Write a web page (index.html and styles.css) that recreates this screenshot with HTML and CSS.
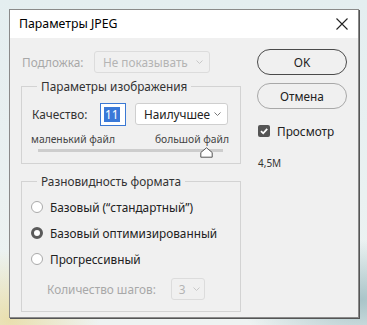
FILE: index.html
```html
<!DOCTYPE html>
<html lang="ru">
<head>
  <meta charset="UTF-8">
  <title>Параметры JPEG</title>
  <link rel="stylesheet" href="styles.css">
</head>
<body>
  <div class="dialog">
    <div class="titlebar">
      <span class="title">Параметры JPEG</span>
      <svg class="close" width="12" height="12" viewBox="0 0 12 12">
        <path d="M0.5 0.5 L11.5 11.5 M11.5 0.5 L0.5 11.5" stroke="#222" stroke-width="1.1" fill="none"/>
      </svg>
    </div>
    <div class="content">
      <div class="left">
        <div class="row matte">
          <span class="label disabled">Подложка:</span>
          <div class="select wide disabled-select">
            <span>Не показывать</span>
            <svg class="chev" width="7" height="4" viewBox="0 0 7 4"><path d="M0.5 0.5 L3.5 3.5 L6.5 0.5" stroke="#c8c8c8" fill="none"/></svg>
          </div>
        </div>

        <fieldset class="group first">
          <legend>Параметры изображения</legend>
          <div class="row quality">
            <span class="label">Качество:</span>
            <div class="num"><span class="sel">11</span></div>
            <div class="select best">
              <span>Наилучшее</span>
              <svg class="chev" width="7" height="4" viewBox="0 0 7 4"><path d="M0.5 0.5 L3.5 3.5 L6.5 0.5" stroke="#777" fill="none"/></svg>
            </div>
          </div>
          <div class="scale">
            <span>маленький файл</span>
            <span>большой файл</span>
          </div>
          <div class="track">
            <svg class="thumb" width="13" height="11" viewBox="0 0 13 11">
              <path d="M6.5 0.8 L12.2 5.5 L12.2 10.2 L0.8 10.2 L0.8 5.5 Z" fill="#fff" stroke="#555" stroke-width="1"/>
            </svg>
          </div>
        </fieldset>

        <fieldset class="group second">
          <legend>Разновидность формата</legend>
          <div class="radio-row"><span class="radio"></span><span>Базовый (“стандартный”)</span></div>
          <div class="radio-row"><span class="radio on"></span><span>Базовый оптимизированный</span></div>
          <div class="radio-row"><span class="radio"></span><span>Прогрессивный</span></div>
          <div class="row steps">
            <span class="label disabled">Количество шагов:</span>
            <div class="select small disabled-select">
              <span>3</span>
              <svg class="chev" width="7" height="4" viewBox="0 0 7 4"><path d="M0.5 0.5 L3.5 3.5 L6.5 0.5" stroke="#c8c8c8" fill="none"/></svg>
            </div>
          </div>
        </fieldset>
      </div>

      <div class="right">
        <div class="button primary">OK</div>
        <div class="button">Отмена</div>
        <div class="check-row">
          <span class="checkbox">
            <svg width="12" height="12" viewBox="0 0 12 12"><path d="M3 6.2 L5.2 8.3 L9.2 3.8" stroke="#fff" stroke-width="1.8" fill="none"/></svg>
          </span>
          <span>Просмотр</span>
        </div>
        <div class="size">4,5M</div>
      </div>
    </div>
  </div>
</body>
</html>
```

FILE: styles.css
```css
* {
  margin: 0;
  padding: 0;
  box-sizing: border-box;
}

body {
  width: 367px;
  height: 325px;
  padding: 9px;
  overflow: hidden;
  font-family: "Noto Sans", "Open Sans", sans-serif;
  font-size: 11.8px;
  line-height: 16px;
  color: #333;
  background:
    radial-gradient(ellipse 90px 70px at 10px 320px, #e9dfae, transparent),
    radial-gradient(ellipse 120px 60px at 360px 300px, #a9c4c8, transparent),
    linear-gradient(#e4eef0, #eef3f2);
}

.dialog {
  width: 350px;
  height: 309px;
  background: #f0f0f0;
  border: 1px solid #8a8a8a;
  box-shadow: 1px 1px 0 #555;
  display: flex;
  flex-direction: column;
}

.titlebar {
  height: 28px;
  background: #fff;
  display: flex;
  align-items: center;
  justify-content: space-between;
  padding: 0 10px 0 9px;
  flex-shrink: 0;
}

.title {
  font-size: 12.3px;
  color: #000;
}

.content {
  display: flex;
  justify-content: space-between;
  padding: 11px 11px 0 11px;
}

.left {
  width: 220px;
  display: flex;
  flex-direction: column;
}

.row {
  display: flex;
  align-items: center;
}

.matte {
  height: 26px;
  padding-left: 1px;
}

.matte .label {
  width: 72px;
}

.disabled {
  color: #a8a8a8;
}

.select {
  height: 22px;
  background: #fff;
  border: 1px solid #cfcfcf;
  border-radius: 3px;
  display: flex;
  align-items: center;
  justify-content: space-between;
  padding: 0 6px 0 8px;
}

.disabled-select {
  background: #f0f0f0;
  border-color: #dcdcdc;
  color: #b4b4b4;
}

.wide {
  width: 116px;
}

.group {
  border: 1px solid #d3d3d3;
  padding: 0 11px 0 10px;
}

.group legend {
  margin-left: 5px;
  padding: 0 4px;
  line-height: 16px;
}

.first {
  margin-top: 3px;
  padding-bottom: 11px;
}

.quality {
  height: 24px;
  margin-top: 8px;
}

.quality .label {
  width: 68px;
}

.num {
  width: 26px;
  height: 23px;
  border: 1px solid #3b78d3;
  background: #fff;
  display: flex;
  align-items: center;
  padding-left: 3px;
}

.sel {
  background: #3a79d8;
  color: #fff;
  line-height: 15px;
  padding: 0 1px;
}

.best {
  width: 93px;
  margin-left: 9px;
  color: #222;
}

.scale {
  display: flex;
  justify-content: space-between;
  font-size: 10.3px;
  line-height: 14px;
  color: #444;
  margin-top: 6px;
  margin-left: -1px;
}

.track {
  height: 3px;
  background: #cdcdcd;
  margin: 3px 6px 0 6px;
  position: relative;
}

.thumb {
  position: absolute;
  left: 162px;
  top: -2px;
}

.second {
  margin-top: 9px;
  padding-bottom: 10px;
}

.radio-row {
  display: flex;
  align-items: center;
  height: 26px;
  color: #222;
}

.radio-row:first-of-type {
  margin-top: 5px;
}

.radio {
  width: 12px;
  height: 12px;
  border-radius: 50%;
  border: 1px solid #aaa;
  background: #fff;
  margin: 0 7px 0 -1px;
}

.radio.on {
  border: 3.5px solid #5a5a5a;
}

.steps {
  height: 24px;
  margin-top: 5px;
  padding-left: 15px;
}

.small {
  width: 34px;
  margin-left: 15px;
  padding: 0 4px 0 7px;
}

.right {
  width: 90px;
  display: flex;
  flex-direction: column;
}

.button {
  height: 26px;
  border: 1px solid #a8a8a8;
  border-radius: 13px;
  display: flex;
  align-items: center;
  justify-content: center;
  color: #222;
  margin-bottom: 8px;
}

.primary {
  border-color: #4a4a4a;
}

.check-row {
  display: flex;
  align-items: center;
  margin-top: 6px;
  padding-left: 1px;
  color: #222;
}

.checkbox {
  width: 12px;
  height: 12px;
  border-radius: 2px;
  background: #555;
  margin-right: 7px;
  display: flex;
}

.size {
  font-size: 10px;
  line-height: 14px;
  margin-top: 17px;
  padding-left: 1px;
  color: #333;
}
```
